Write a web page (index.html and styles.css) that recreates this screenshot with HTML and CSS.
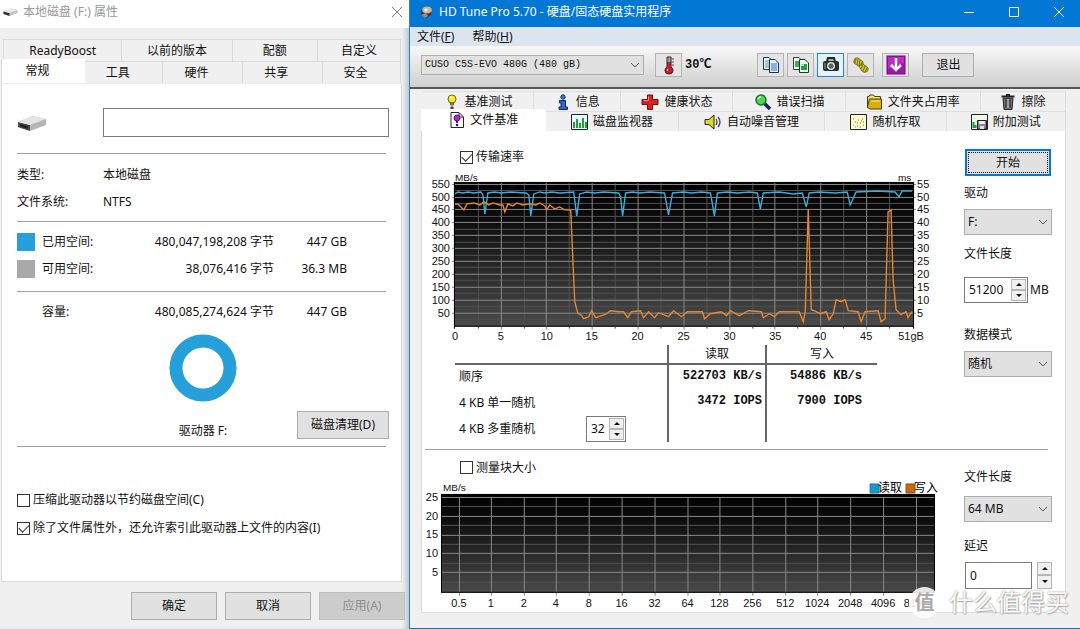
FILE: index.html
```html
<!DOCTYPE html>
<html lang="zh-CN">
<head>
<meta charset="utf-8">
<title>HD Tune Pro 5.70</title>
<link rel="stylesheet" href="styles.css">
</head>
<body>
<main class="desktop">

<section class="props" aria-label="本地磁盘 (F:) 属性">
  <header class="props-title">
    <svg width="15" height="10" viewBox="0 0 30 18"><path d="M1 8L16 2L29 5V11L13 17L1 13Z" fill="#c4c4c4"/><path d="M1 8L13 11V17L1 13Z" fill="#333"/><path d="M1 8L16 2L29 5L13 11Z" fill="#e8e8e8"/></svg>
    <h1>本地磁盘 (F:) 属性</h1>
    <button class="props-close" aria-label="关闭"><svg width="12" height="12" viewBox="0 0 12 12"><path d="M1 1L11 11M11 1L1 11" stroke="#777" fill="none"/></svg></button>
  </header>
  <div class="props-body">
    <nav class="ptabs">
      <div class="ptab-row ptab-back"><button>ReadyBoost</button><button>以前的版本</button><button>配额</button><button>自定义</button></div>
      <div class="ptab-row ptab-front"><button class="active">常规</button><button>工具</button><button>硬件</button><button>共享</button><button>安全</button></div>
    </nav>
    <div class="props-panel">
      <div class="name-row">
        <svg width="30" height="18" viewBox="0 0 30 18"><path d="M1 8L16 2L29 5V11L13 17L1 13Z" fill="#b5b5b5"/><path d="M1 8L13 11V17L1 13Z" fill="#4a4a4a"/><path d="M3 10L11 12V15L3 12.500Z" fill="#222"/><path d="M1 8L16 2L29 5L13 11Z" fill="#e4e4e4"/></svg>
        <input type="text" aria-label="卷标" value="">
      </div>
      <hr>
      <dl class="facts"><dt>类型:</dt><dd>本地磁盘</dd><dt>文件系统:</dt><dd>NTFS</dd></dl>
      <hr>
      <table class="space">
        <tr><td><span class="swatch used"></span></td><th>已用空间:</th><td class="num">480,047,198,208 字节</td><td class="num">447 GB</td></tr>
        <tr><td><span class="swatch free"></span></td><th>可用空间:</th><td class="num">38,076,416 字节</td><td class="num">36.3 MB</td></tr>
      </table>
      <hr>
      <table class="space">
        <tr><td></td><th>容量:</th><td class="num">480,085,274,624 字节</td><td class="num">447 GB</td></tr>
      </table>
      <svg class="donut" width="68" height="68" viewBox="0 0 68 68"><circle cx="34" cy="34" r="27" fill="none" stroke="#26a0da" stroke-width="13"/></svg>
      <div class="drive-row"><span class="drive-name">驱动器 F:</span><button class="btn">磁盘清理(D)</button></div>
      <hr>
      <div class="options">
        <label class="check"><input type="checkbox">压缩此驱动器以节约磁盘空间(C)</label>
        <label class="check"><input type="checkbox" checked>除了文件属性外，还允许索引此驱动器上文件的内容(I)</label>
      </div>
    </div>
    <footer class="props-footer"><button class="btn">确定</button><button class="btn">取消</button><button class="btn" disabled>应用(A)</button></footer>
  </div>
</section>

<section class="hdt" aria-label="HD Tune Pro">
  <header class="hdt-title">
    <svg width="14" height="14" viewBox="0 0 14 14"><path d="M2 5L8 1L13 4L12 10L7 13L2 10Z" fill="#333a44"/><ellipse cx="8" cy="5" rx="5" ry="3.500" fill="#c9b49c"/><circle cx="7" cy="5" r="1.500" fill="#fff"/><path d="M2 10L7 8L9 11L6 13Z" fill="#8e8e8e"/></svg>
    <h2>HD Tune Pro 5.70 - 硬盘/固态硬盘实用程序</h2>
    <div class="win-btns">
      <button aria-label="最小化"><svg width="12" height="12" viewBox="0 0 12 12"><path d="M1 6.500H11" stroke="#fff"/></svg></button>
      <button aria-label="最大化"><svg width="12" height="12" viewBox="0 0 12 12"><path d="M1.500 1.500H10.500V10.500H1.500Z" stroke="#fff" fill="none"/></svg></button>
      <button aria-label="关闭"><svg width="12" height="12" viewBox="0 0 12 12"><path d="M1 1L11 11M11 1L1 11" stroke="#fff"/></svg></button>
    </div>
  </header>
  <nav class="menu"><button>文件(<u>F</u>)</button><button>帮助(<u>H</u>)</button></nav>
  <div class="toolbar">
    <span class="select drive-select"><select aria-label="驱动器"><option>CUSO C5S-EVO 480G (480 gB)</option></select><svg width="10" height="6" viewBox="0 0 10 6"><path d="M1 1L5 5L9 1" fill="none" stroke="#555"/></svg></span>
    <button class="tool" aria-label="温度"><svg width="14" height="20" viewBox="0 0 14 20"><path d="M5 2H9V12Q11 13 11 15.500Q11 19 7 19Q3 19 3 15.500Q3 13 5 12Z" fill="#c8202a" stroke="#4b1014"/><path d="M5.500 2.500H8.500V7H5.500Z" fill="#5fb4b0"/><path d="M9.500 4H12M9.500 7H12M9.500 10H12" stroke="#555"/><path d="M5.500 14V16" stroke="#fff"/></svg></button>
    <output class="temp">30℃</output>
    <div class="tools">
      <button class="tool" aria-label="复制文本"><svg width="18" height="18" viewBox="0 0 18 18"><path d="M1.500 1.500H7L9.500 4V13.500H1.500Z" fill="#fff" stroke="#234"/><path d="M3 5H8M3 7H8M3 9H8M3 11H8" stroke="#4a86c8"/><path d="M7.500 3.500H13L16.500 7V16.500H7.500Z" fill="#e6f3ff" stroke="#1b2f4e"/><path d="M9 8H15M9 10H15M9 12H15M9 14H15" stroke="#2a70bd"/></svg></button>
      <button class="tool" aria-label="复制图像"><svg width="18" height="18" viewBox="0 0 18 18"><path d="M1.500 1.500H7L9.500 4V13.500H1.500Z" fill="#fff" stroke="#243"/><path d="M3 5H7V11H3Z" fill="#3fae49"/><path d="M7.500 3.500H13L16.500 7V16.500H7.500Z" fill="#e9fbe9" stroke="#1e3a2a"/><path d="M9 8H15V14H9Z" fill="#2f9d3c"/><path d="M9 8H12V10H9Z" fill="#9fd8ee"/></svg></button>
      <button class="tool hot" aria-label="保存截图"><svg width="18" height="18" viewBox="0 0 18 18"><path d="M5 5L6 2H12L13 5" fill="#a9b3a9" stroke="#222" stroke-width="2"/><rect x="1" y="5" width="16" height="10" rx="2" fill="#27302b"/><circle cx="9" cy="10" r="4" fill="#cfd8d2"/><circle cx="9" cy="10" r="2.500" fill="#56635b"/><path d="M3 7V13" stroke="#8d9991"/></svg></button>
      <button class="tool" aria-label="选项"><svg width="18" height="18" viewBox="0 0 18 18"><g fill="#d4c832" stroke="#756c10"><path d="M2 4Q3 1 6 2L11 6Q12 9 9 10Q7 11 5 9L2 7Z"/><path d="M7 10Q8 7 11 8L16 12Q17 15 14 16Q12 17 10 15Z"/></g><path d="M4 3L3 7M6 3L5 9M8 4L7 10M10 6L9 10M11 9L9 13M13 10L11 15M15 12L13 16" stroke="#756c10"/></svg></button>
      <button class="tool save" aria-label="保存"><svg width="20" height="20" viewBox="0 0 20 20"><rect x="1" y="1" width="18" height="18" fill="#a412b0" stroke="#720a7c"/><path d="M2 2H18V8L2 14Z" fill="#c64bd0" opacity=".5"/><path d="M10 3V14M5 10L10 15L15 10" fill="none" stroke="#fff" stroke-width="2.500"/></svg></button>
      <button class="exit">退出</button>
    </div>
  </div>
  <div class="hdt-body">
    <nav class="htabs">
      <div class="htab-row htab-back">
        <button><svg width="16" height="16" viewBox="0 0 16 16"><circle cx="8" cy="5" r="4" fill="#f4e92b" stroke="#6d6a10"/><path d="M6.500 9H9.500V11H6.500Z" fill="#c9be20" stroke="#555"/><circle cx="8" cy="14" r="1.700" fill="#444"/><path d="M6 4Q6 3 8 3" fill="none" stroke="#fff"/></svg>基准测试</button>
        <button><svg width="16" height="16" viewBox="0 0 16 16"><circle cx="8" cy="3" r="2.200" fill="#3a7edb" stroke="#102a66"/><path d="M4.500 6.500H10.500V13H12.500V15.500H4V13H6V9H4.500Z" fill="#2a69c8" stroke="#102a66"/></svg>信息</button>
        <button><svg width="18" height="16" viewBox="0 0 18 16"><path d="M6.500 1H11.500V5.500H17V10.500H11.500V15.500H6.500V10.500H1V5.500H6.500Z" fill="#dc2222" stroke="#6d0f0f"/><path d="M7.500 2.500V6.500H2.500" fill="none" stroke="#f58b8b"/></svg>健康状态</button>
        <button><svg width="18" height="16" viewBox="0 0 18 16"><path d="M10 9L16 15" stroke="#14246e" stroke-width="3.500"/><circle cx="7" cy="6" r="5" fill="#45d94d" stroke="#276b35" stroke-width="1.500"/><path d="M4 5Q5 3 7 3" fill="none" stroke="#dfffe0" stroke-width="1.500"/></svg>错误扫描</button>
        <button><svg width="17" height="16" viewBox="0 0 17 16"><path d="M1.500 14V2.500H3L4 1H7.500L8.500 2.500H14.500V5" fill="#f4df73" stroke="#4c3e0c"/><path d="M3.500 5H15.500V15H3.500L1.500 13Z" fill="#d9ac1a" stroke="#4c3e0c"/><path d="M5 7H14" stroke="#f7e48d"/></svg>文件夹占用率</button>
        <button><svg width="16" height="16" viewBox="0 0 16 16"><path d="M3 4H13L12 15.500H4Z" fill="#777" stroke="#222"/><path d="M1.500 2.500H14.500M6 1H10" stroke="#222" stroke-width="2"/><path d="M6 5V14M10 5V14" stroke="#222"/><path d="M8 5V14" stroke="#ccc"/></svg>擦除</button>
      </div>
      <div class="htab-row htab-front">
        <button class="active"><svg width="16" height="16" viewBox="0 0 16 16"><path d="M2 .5H10L14.500 5V15.500H2Z" fill="#fff" stroke="#223"/><path d="M10 1V5H14" fill="none" stroke="#223"/><circle cx="8" cy="6" r="3" fill="#c31fd0" stroke="#5d0b66"/><path d="M8 9V11" stroke="#5d0b66" stroke-width="2"/><circle cx="8" cy="13" r="1.300" fill="#223"/></svg>文件基准</button>
        <button><svg width="17" height="16" viewBox="0 0 17 16"><path d="M.5.5H16.500V15.500H.5Z" fill="#e9ffff" stroke="#223"/><path d="M3 14V8M6 14V5M9 14V9M12 14V4M15 14V8" stroke="#1da432" stroke-width="2"/></svg>磁盘监视器</button>
        <button><svg width="18" height="16" viewBox="0 0 18 16"><path d="M1 5.500H5L10 1V15L5 10.500H1Z" fill="#e5d821" stroke="#222"/><path d="M12 5Q14 8 12 11M14 3Q18 8 14 13" fill="none" stroke="#444" stroke-width="1.300"/></svg>自动噪音管理</button>
        <button><svg width="17" height="16" viewBox="0 0 17 16"><path d="M.5.5H16.500V15.500H.5Z" fill="#fffbd0" stroke="#222"/><path d="M3 11H4M5 8H6M7 12H8M8 6H9M10 9H11M12 5H13M13 11H14M5 13H6M10 13H11M11 7H12M3 5H4M7 9H8M13 8H14" stroke="#8b7a14"/></svg>随机存取</button>
        <button><svg width="17" height="16" viewBox="0 0 17 16"><path d="M.5.5H16.500V15.500H.5Z" fill="#eafbea" stroke="#222"/><path d="M2.500 14V8M4.500 14V11" stroke="#14a333" stroke-width="2"/><path d="M6.500 6.500H15.500V15H6.500Z" fill="#8a7f93" stroke="#222"/><path d="M8 7H14V10H8Z" fill="#eee"/><path d="M9 12H13V15H9Z" fill="#ddd"/></svg>附加测试</button>
      </div>
    </nav>
    <div class="hdt-panel">
      <div class="bench upper">
        <div class="bench-main">
          <label class="check"><input type="checkbox" checked>传输速率</label>
          <svg class="chart" viewBox="425 170 515 175" role="img" aria-label="传输速率">
            <defs>
              <linearGradient id="fade" x1="0" y1="0" x2="0" y2="1"><stop offset="0" stop-color="#000"/><stop offset=".25" stop-color="#0c0c0c"/><stop offset="1" stop-color="#4a4a4a"/></linearGradient>
              <clipPath id="plot"><rect x="455" y="183" width="459" height="144"/></clipPath>
            </defs>
            <rect x="454" y="182" width="461" height="145" fill="url(#fade)"/>
            <path class="minor" d="M455 190.500H914M455 203.500H914M455 216.500H914M455 229.500H914M455 242.500H914M455 255.500H914M455 267.500H914M455 280.500H914M455 293.500H914M455 306.500H914M455 319.500H914M478.500 183V329M524.500 183V329M569.500 183V329M615.500 183V329M661.500 183V329M707.500 183V329M753.500 183V329M798.500 183V329M844.500 183V329M890.500 183V329"/>
            <path class="major" d="M452 184.500H917M452 197.500H917M452 209.500H917M452 222.500H917M452 235.500H917M452 248.500H917M452 261.500H917M452 274.500H917M452 287.500H917M452 300.500H917M452 313.500H917M501.500 183V330M546.500 183V330M592.500 183V330M638.500 183V330M684.500 183V330M730.500 183V330M775.500 183V330M821.500 183V330M867.500 183V330"/>
            <path d="M454.500 182V329M914.500 182V329M454 326.500H915M454 182.500H915" stroke="#000" fill="none"/>
            <g clip-path="url(#plot)">
              <path class="read" d="M455 194L458 192L463 193L468 192L474 193L481 192L483 195L485 214L488 193L495 192L501 193L511 192L526 193L529 195L531 216L534 194L540 192L545 193L552 192L560 193L574 192L577 216L580 194L587 192L595 193L604 192L619 193L621 197L623 216L626 193L633 192L640 193L650 192L665 193L669 215L673 193L684 192L692 193L702 192L711 193L715 216L718 193L728 192L738 193L750 192L758 193L761 209L764 193L780 192L794 194L803 193L807 207L810 193L820 192L836 193L848 192L851 205L857 192L878 191L896 192L900 197L903 191L913 191"/>
              <path class="write" d="M455 204L458 204L464 210L467 204L474 203L480 205L484 202L489 205L493 203L500 205L503 205L505 212L508 204L513 206L517 203L523 205L530 204L536 205L540 203L545 206L547 210L550 205L555 209L560 207L565 210L571 210L573 256L575 302L578 313L582 316L584 319L589 317L592 311L596 318L605 315L611 311L619 312L624 312L628 318L632 312L641 311L644 318L649 312L655 318L659 313L664 315L669 317L674 311L682 317L688 312L703 312L705 319L711 314L722 312L727 316L731 311L740 316L749 311L762 312L764 318L770 314L775 317L780 312L800 312L804 322L806 312L809 209L812 310L815 311L821 314L827 312L830 320L834 314L837 300L842 302L846 300L849 311L859 312L862 322L866 312L879 311L882 322L886 319L889 212L892 210L894 280L897 310L902 315L907 312L909 318L913 312"/>
            </g>
            <g class="unit"><text x="455" y="181">MB/s</text><text x="899" y="181">ms</text></g>
            <g class="axis end"><text x="450" y="188">550</text><text x="450" y="201">500</text><text x="450" y="213">450</text><text x="450" y="226">400</text><text x="450" y="239">350</text><text x="450" y="252">300</text><text x="450" y="265">250</text><text x="450" y="278">200</text><text x="450" y="291">150</text><text x="450" y="304">100</text><text x="450" y="317">50</text></g>
            <g class="axis"><text x="918" y="188">55</text><text x="918" y="201">50</text><text x="918" y="213">45</text><text x="918" y="226">40</text><text x="918" y="239">35</text><text x="918" y="252">30</text><text x="918" y="265">25</text><text x="918" y="278">20</text><text x="918" y="291">15</text><text x="918" y="304">10</text><text x="918" y="317">5</text></g>
            <g class="axis mid"><text x="455" y="340">0</text><text x="501" y="340">5</text><text x="547" y="340">10</text><text x="592" y="340">15</text><text x="638" y="340">20</text><text x="684" y="340">25</text><text x="730" y="340">30</text><text x="776" y="340">35</text><text x="821" y="340">40</text><text x="867" y="340">45</text><text x="912" y="340">51gB</text></g>
          </svg>
          <table class="results">
            <colgroup><col class="c-name"><col class="c-read"><col class="c-write"></colgroup>
            <thead><tr><td></td><th>读取</th><th>写入</th></tr></thead>
            <tbody>
              <tr><th>顺序</th><td>522703 KB/s</td><td>54886 KB/s</td></tr>
              <tr><th>4 KB 单一随机</th><td>3472 IOPS</td><td>7900 IOPS</td></tr>
              <tr><th><span class="multi"><label for="depth">4 KB 多重随机</label><span class="spin depth"><input id="depth" type="text" value="32"><span class="arrows"><button aria-label="增加"><i class="up"></i></button><button aria-label="减少"><i class="down"></i></button></span></span></span></th><td></td><td></td></tr>
            </tbody>
          </table>
        </div>
        <div class="side">
          <button class="start">开始</button>
          <label for="drv">驱动</label>
          <span class="select"><select id="drv"><option>F:</option></select><svg width="10" height="6" viewBox="0 0 10 6"><path d="M1 1L5 5L9 1" fill="none" stroke="#555"/></svg></span>
          <label for="len">文件长度</label>
          <div class="len-row"><span class="spin"><input id="len" type="text" value="51200"><span class="arrows"><button aria-label="增加"><i class="up"></i></button><button aria-label="减少"><i class="down"></i></button></span></span><span>MB</span></div>
          <label for="mode">数据模式</label>
          <span class="select"><select id="mode"><option>随机</option></select><svg width="10" height="6" viewBox="0 0 10 6"><path d="M1 1L5 5L9 1" fill="none" stroke="#555"/></svg></span>
        </div>
      </div>
      <hr>
      <div class="bench lower">
        <div class="bench-main">
          <label class="check"><input type="checkbox">测量块大小</label>
          <svg class="chart" viewBox="425 480 515 131" role="img" aria-label="测量块大小">
            <rect x="441" y="495" width="495" height="99" fill="url(#fade)"/>
            <path class="minor" d="M441 507.500H936M441 526.500H936M441 545.500H936M441 564.500H936M441 583.500H936"/>
            <path class="major" d="M441 498.500H936M441 517.500H936M441 536.500H936M441 554.500H936M441 573.500H936M459.500 498V597M491.500 498V597M524.500 498V597M556.500 498V597M589.500 498V597M622.500 498V597M655.500 498V597M688.500 498V597M720.500 498V597M753.500 498V597M786.500 498V597M818.500 498V597M851.500 498V597M884.500 498V597M917.500 498V597"/>
            <path d="M441.500 495V594M935.500 495V594M441 593.500H936M441 495.500H936" stroke="#000" fill="none"/>
            <text class="unit" x="443" y="492">MB/s</text>
            <path d="M871 485H880V494H871Z" fill="#169bcb" stroke="#16779c"/><path d="M907 485H916V494H907Z" fill="#c8690b" stroke="#8f4b0a"/>
            <g class="legend"><text x="879" y="493">读取</text><text x="915" y="493">写入</text></g>
            <g class="axis end"><text x="438" y="502">25</text><text x="438" y="521">20</text><text x="438" y="539">15</text><text x="438" y="558">10</text><text x="438" y="577">5</text></g>
            <g class="axis mid"><text x="459" y="608">0.5</text><text x="491" y="608">1</text><text x="524" y="608">2</text><text x="556" y="608">4</text><text x="589" y="608">8</text><text x="622" y="608">16</text><text x="655" y="608">32</text><text x="688" y="608">64</text><text x="720" y="608">128</text><text x="753" y="608">256</text><text x="786" y="608">512</text><text x="818" y="608">1024</text><text x="851" y="608">2048</text><text x="884" y="608">4096</text><text x="917" y="608">8192</text></g>
          </svg>
        </div>
        <div class="side">
          <label for="blk">文件长度</label>
          <span class="select"><select id="blk"><option>64 MB</option></select><svg width="10" height="6" viewBox="0 0 10 6"><path d="M1 1L5 5L9 1" fill="none" stroke="#555"/></svg></span>
          <label for="delay">延迟</label>
          <div class="delay-row"><input id="delay" type="text" value="0"><span class="arrows"><button aria-label="增加"><i class="up"></i></button><button aria-label="减少"><i class="down"></i></button></span></div>
        </div>
      </div>
    </div>
  </div>
</section>

<div class="watermark"><span class="wm-logo">值</span><span>什么值得买</span></div>
</main>
</body>
</html>
```
FILE: styles.css
```css
* { box-sizing: border-box; }
body { margin: 0; font: 12px/16px "Noto Sans", "Noto Sans CJK SC", sans-serif; color: #111; }
button, input, select { font: inherit; color: inherit; margin: 0; }
button { padding: 0; border: 0; background: none; }
h1, h2 { margin: 0; font-size: 12px; font-weight: 400; white-space: nowrap; }
hr { margin: 0; border: 0; border-top: 1px solid #a0a0a0; }
th { font-weight: 400; text-align: left; }
table { border-collapse: collapse; }
td, th { padding: 0; }
svg { display: block; flex: none; }

.desktop { position: relative; display: grid; grid-template-columns: 409fr 671fr; min-height: 100vh; overflow: hidden; }

/* Drive properties dialog */
.props { display: flex; flex-direction: column; background: #f0f0f0; box-shadow: inset -5px 0 5px -2px #b6c6d0; }
.props-title { display: flex; align-items: center; gap: 5px; height: 28px; padding: 0 6px 4px 3px; background: #fff; color: #999; }
.props-close { display: flex; margin-left: auto; }
.props-body { flex: 1; display: flex; flex-direction: column; padding: 11px 4px 9px 1px; }
.ptabs { margin-right: 4px; }
.ptab-row { display: grid; }
.ptab-row button { height: 22px; border: 1px solid #dadada; border-width: 1px 1px 0 0; }
.ptab-row button:first-child { border-left-width: 1px; }
.ptab-back { grid-template-columns: 119fr 110fr 85fr 83fr; margin-left: 2px; }
.ptab-front { grid-template-columns: 84fr 78fr 79fr 80fr 78fr; }
.ptab-front button { padding-right: 12px; }
.ptab-front .active { height: 25px; margin: -2px 0 -1px; padding-bottom: 2px; background: #fff; border-width: 0 0 0 1px; }
.props-panel { flex: 1; margin-right: 3px; padding: 0 12px 0 15px; background: #fff; border: 1px solid #dcdcdc; border-top-color: #eee; }
.props-panel hr { margin-right: 3px; }
.name-row { display: flex; align-items: center; gap: 56px; padding: 24px 0 16px; }
.name-row input { flex: 1; min-width: 0; height: 29px; border: 1px solid #7a7a7a; background: #fff; }
.facts { display: grid; grid-template-columns: 86px 1fr; grid-auto-rows: 27px; align-items: center; margin: 7px 0 6px; }
.facts dd { margin: 0; }
.space { width: 330px; table-layout: fixed; margin: 6px 0 9px; }
.space tr { height: 27px; }
.space td:first-child { width: 25px; }
.space th { width: 78px; }
.space td:last-child { width: 73px; }
.num { text-align: right; white-space: nowrap; }
.swatch { display: block; width: 18px; height: 18px; }
.used { background: #26a0da; }
.free { background: #a9a9a9; }
.donut { margin: 0 auto; }
.drive-row { display: grid; grid-template-columns: 1fr auto 1fr; align-items: end; margin: 9px 0 7px; }
.drive-name { grid-column: 2; }
.drive-row .btn { justify-self: end; width: 92px; }
.btn { height: 28px; border: 1px solid #adadad; background: #e1e1e1; }
.btn:disabled { background: #ccc; border-color: #bfbfbf; color: #8f8f8f; }
.options { display: grid; gap: 12px; padding-top: 45px; }
.check { display: flex; align-items: center; gap: 3px; }
.check input { appearance: none; flex: none; width: 13px; height: 13px; border: 1px solid #333; background: #fff; display: grid; place-items: center; }
.check input:checked::after { content: ""; width: 9px; height: 5px; margin-bottom: 3px; border: solid #333; border-width: 0 0 1px 1px; transform: rotate(-45deg); }
.props-footer { display: flex; justify-content: flex-end; gap: 8px; padding-top: 10px; }
.props-footer .btn { width: 86px; }

/* HD Tune window */
.hdt { display: flex; flex-direction: column; min-width: 0; background: #f0f0f0; border-left: 1px solid #2d83bd; border-bottom: 1px solid #2d6f9e; }
.hdt-title { display: flex; align-items: center; gap: 6px; height: 27px; padding: 0 15px 4px 9px; background: #0277d4; color: #fff; }
.win-btns { display: flex; gap: 33px; margin-left: auto; }
.menu { display: flex; gap: 18px; height: 19px; padding-left: 7px; background: #dce4ee; }
.toolbar { display: flex; align-items: center; height: 43px; padding: 0 8px 4px 11px; background: linear-gradient(#f8f8f8, #cfcfcf); border-bottom: 2px solid #555; }
.select { position: relative; display: block; }
.select select { appearance: none; display: block; width: 100%; height: 26px; padding: 0 3px; border: 1px solid #adadad; border-radius: 0; background: #e1e1e1; }
.select svg { position: absolute; right: 4px; top: 0; bottom: 0; margin: auto; pointer-events: none; }
.drive-select { width: 223px; }
.drive-select select { height: 20px; font-family: "Liberation Mono", monospace; font-size: 10px; }
.tool { display: grid; place-items: center; width: 27px; height: 24px; border: 1px solid #b4b4b4; background: #e4e4e4; }
.drive-select + .tool { margin-left: 11px; }
.tool.hot { border-color: #2d83bd; background: #e5f1fb; }
.tool.save { margin-left: 5px; }
.temp { margin-left: 3px; font: bold 12px/16px "Liberation Mono", "Noto Sans CJK SC", monospace; }
.tools { display: flex; gap: 3px; margin-left: 46px; }
.exit { width: 52px; height: 24px; margin-left: 10px; border: 1px solid #adadad; background: #e1e1e1; }
.hdt-body { flex: 1; display: flex; flex-direction: column; padding: 2px 14px 15px 11px; }
.htab-row { display: grid; }
.htab-row button { display: flex; justify-content: center; align-items: center; gap: 5px; height: 20px; border: 1px solid #dedede; border-width: 1px 1px 0 0; white-space: nowrap; }
.htab-back { grid-template-columns: 111fr 87fr 112fr 112fr 135fr 85fr; margin-left: 2px; }
.htab-front { grid-template-columns: 125fr 132fr 146fr 121fr 119fr; }
.htab-front .active { height: 22px; margin: -2px 0 0; background: #fff; border-width: 0; }
.hdt-panel { flex: 1; background: #fff; border: 1px solid #dcdcdc; border-top: 0; padding: 0 13px 0 3px; }
.hdt-panel hr { margin-right: 4px; }
.bench { display: grid; grid-template-columns: minmax(0, 1fr) 88px; gap: 25px; }
.upper { padding-top: 18px; }
.lower { padding-top: 10px; }
.bench-main > .check { margin-left: 35px; height: 16px; }
.upper .chart { margin-top: 5px; }
.lower .chart { margin-top: 3px; }
.chart { width: 100%; height: auto; overflow: visible; }
.minor { fill: none; stroke: #505050; }
.major { fill: none; stroke: #8a8a8a; }
.read, .write { fill: none; stroke-width: 1.400; stroke: #3aaedc; }
.write { stroke: #e58732; }
.axis, .unit { font-family: "Liberation Sans", sans-serif; font-size: 11px; fill: #111; }
.unit { font-size: 10px; }
.legend { font-size: 12px; }
.end { text-anchor: end; }
.mid { text-anchor: middle; }
.results { width: 422px; margin: 0 0 7px 30px; table-layout: fixed; }
.c-name { width: 213px; }
.c-read { width: 98px; }
.results thead tr { height: 19px; }
.results thead th { text-align: center; line-height: 16px; }
.results thead { border-bottom: 2px solid #666; }
.results tbody tr { height: 26px; }
.results tbody th { padding-left: 4px; }
.results td + td, .results th + th, .results th + td, .results td + th { border-left: 2px solid #666; }
.results tbody td { text-align: right; vertical-align: top; padding: 3px 3px 0 0; font: bold 12px/16px "Liberation Mono", monospace; }
.results tbody td:last-child { padding-right: 15px; }
.multi { display: flex; align-items: center; justify-content: space-between; padding-right: 41px; }
.spin { display: flex; border: 1px solid #7a7a7a; background: #fff; height: 26px; width: 64px; padding: 1px; }
.spin.depth { width: 40px; }
.spin input { flex: 1; min-width: 0; width: 0; border: 0; padding: 0 0 0 3px; background: none; }
.arrows { display: grid; width: 15px; flex: none; }
.arrows button { display: grid; place-items: center; border: 1px solid #b5b5b5; background: #f0f0f0; }
.up, .down { border: 3px solid transparent; border-bottom-color: #111; border-top-width: 0; }
.down { border-width: 3px 3px 0; border-top-color: #111; }
.side { display: flex; flex-direction: column; }
.start { height: 27px; margin: 0 1px; border: 2px solid #0078d7; outline: 1px dotted #111; outline-offset: -4px; background: #e1e1e1; }
.side label { margin: 9px 0 8px; height: 16px; }
.upper .select { margin-bottom: 2px; }
.len-row { display: flex; align-items: center; gap: 2px; margin: 7px 0 15px; }
.lower .side label:first-child { margin: 9px 0 11px; }
.lower .select { margin-bottom: 7px; }
.delay-row { display: flex; gap: 5px; margin-left: 1px; }
.delay-row input { flex: 1; min-width: 0; height: 27px; border: 1px solid #7a7a7a; padding: 0 4px; }

.watermark { position: absolute; right: 11px; bottom: 11px; display: flex; align-items: center; gap: 9px; font-size: 24px; line-height: 32px; color: #fafafa; text-shadow: 0 0 2px #888, 1px 1px 1px #bbb; white-space: nowrap; pointer-events: none; }
.wm-logo { width: 31px; height: 31px; border-radius: 50%; background: #fffd; color: #aaa; font-size: 20px; font-weight: 700; line-height: 31px; text-align: center; text-shadow: none; }
```
